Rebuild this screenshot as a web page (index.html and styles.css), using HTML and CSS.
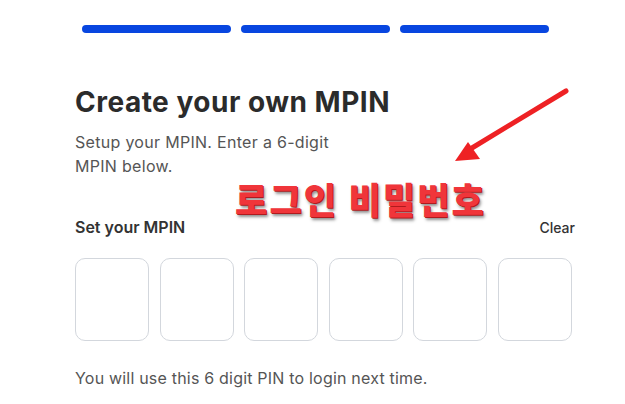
FILE: index.html
```html
<!DOCTYPE html>
<html lang="en">
<head>
<meta charset="utf-8">
<title>Create your own MPIN</title>
<link rel="stylesheet" href="styles.css">
</head>
<body>
<div class="page">
  <div class="progress">
    <span class="bar"></span>
    <span class="bar"></span>
    <span class="bar"></span>
  </div>
  <main class="content">
    <h1 class="title">Create your own MPIN</h1>
    <p class="subtitle">Setup your MPIN. Enter a 6-digit<br>MPIN below.</p>
    <div class="label-row">
      <span class="label">Set your MPIN</span>
      <span class="clear">Clear</span>
    </div>
    <div class="pins">
      <div class="pin"></div>
      <div class="pin"></div>
      <div class="pin"></div>
      <div class="pin"></div>
      <div class="pin"></div>
      <div class="pin"></div>
    </div>
    <p class="hint">You will use this 6 digit PIN to login next time.</p>
  </main>
  <div class="annotation">로그인 비밀번호</div>
  <svg class="arrow" width="130" height="90" viewBox="0 0 130 90">
    <line x1="121" y1="11" x2="22" y2="71" stroke="#ee2124" stroke-width="5" stroke-linecap="round"/>
    <polygon points="10,81 23,62 35,79" fill="#ee2124"/>
  </svg>
</div>
</body>
</html>
```
FILE: styles.css
```css
* { box-sizing: border-box; }
html, body {
  margin: 0;
  padding: 0;
  background: #ffffff;
}
body {
  font-family: "Inter", "Noto Sans", sans-serif;
  color: #2e2e2e;
}
.page {
  position: relative;
  width: 625px;
  height: 404px;
  overflow: hidden;
}
.progress {
  display: flex;
  gap: 10px;
  padding: 25px 0 0 82px;
}
.bar {
  width: 149px;
  height: 8px;
  border-radius: 4px;
  background: #0846e0;
}
.content {
  display: flex;
  flex-direction: column;
  padding: 0 50px 0 75px;
}
.title {
  margin: 52px 0 0;
  font-size: 28px;
  line-height: 34px;
  font-weight: 700;
  color: #2b2b2b;
  letter-spacing: 0.5px;
}
.subtitle {
  margin: 11px 0 0;
  font-size: 16px;
  line-height: 24px;
  color: #555555;
  letter-spacing: 0.3px;
}
.label-row {
  margin-top: 39px;
  display: flex;
  justify-content: space-between;
  align-items: center;
  height: 20px;
}
.label {
  font-size: 16px;
  font-weight: 600;
  color: #333333;
}
.clear {
  font-size: 14px;
  font-weight: 500;
  color: #333333;
}
.pins {
  margin-top: 21px;
  display: flex;
  gap: 10.5px;
}
.pin {
  width: 74px;
  height: 83px;
  border: 1px solid #d3d7dd;
  border-radius: 10px;
}
.hint {
  margin: 27px 0 0;
  font-size: 16px;
  line-height: 20px;
  color: #555555;
  letter-spacing: 0.2px;
}
.annotation {
  position: absolute;
  left: 235px;
  top: 175px;
  font-family: "Noto Sans CJK KR", sans-serif;
  font-weight: 900;
  font-size: 35px;
  line-height: 44px;
  letter-spacing: 2.2px;
  color: #f0353a;
  transform: scaleY(1.05);
  transform-origin: top left;
  text-shadow: 1px 1px 0 #b01a1e, 2px 3px 3px rgba(0,0,0,0.45);
}
.arrow {
  position: absolute;
  left: 445px;
  top: 80px;
}
```
